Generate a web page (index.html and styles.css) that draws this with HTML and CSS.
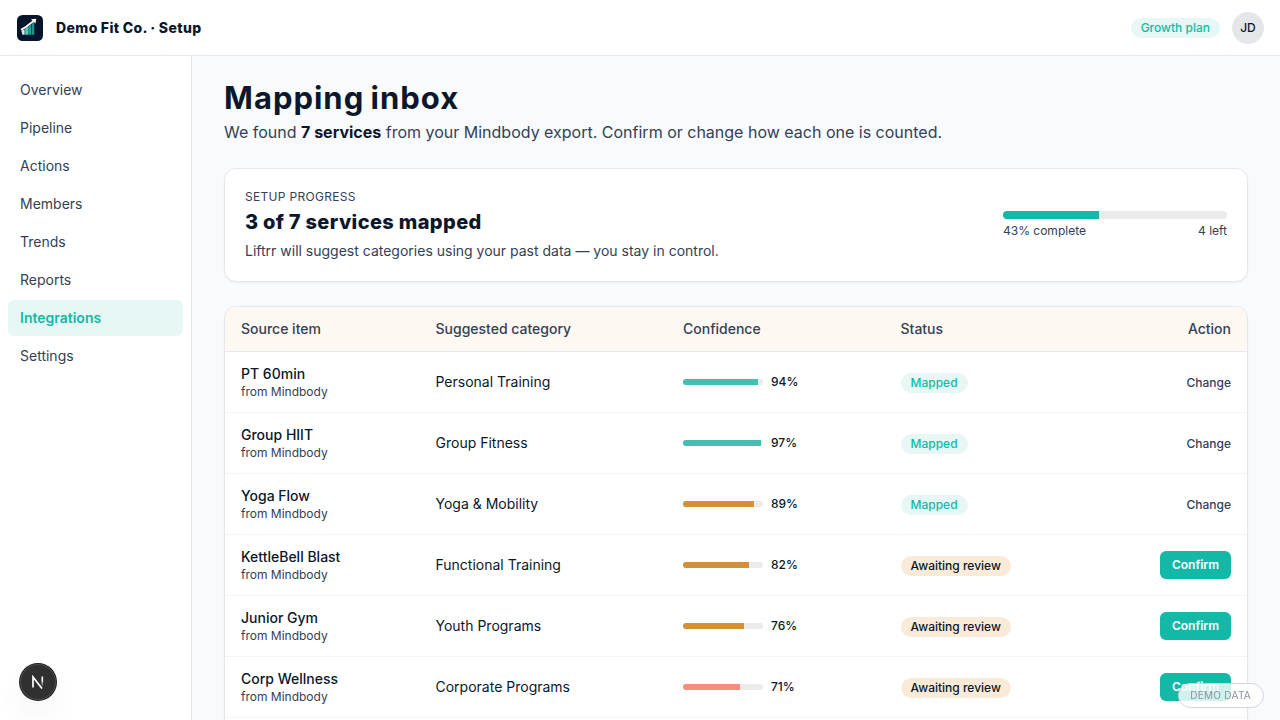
FILE: index.html
```html
<!DOCTYPE html>
<html lang="en">
<head>
    <meta charset="UTF-8">
    <meta name="viewport" content="width=device-width, initial-scale=1.0">
    <title>Mapping inbox</title>
    <link rel="stylesheet" href="styles.css">
</head>
<body>
    <header class="topbar">
        <svg class="logo" viewBox="0 0 28 28">
            <rect x="1" y="1" width="26" height="26" rx="5.5" fill="#07152b"/>
            <path d="M5.3 16.8 8.6 15.2v5.600H6.500z" fill="#d5f2ee"/>
            <path d="M9.2 14.600 12.200 12.800v8H9.200z" fill="#5cc9bd"/>
            <path d="M12.200 12.800 15 10.500v10.300h-2.800z" fill="#14a698"/>
            <path d="M15.600 10 18.300 7.800v13h-2.700z" fill="#2a8f8a"/>
            <path d="M5 15.800 9.800 13 17.800 6.800" fill="none" stroke="#fff" stroke-width="1.800"/>
            <path d="M15 5.200 20.300 4.800 19.400 9.500z" fill="#fff"/>
        </svg>
        <div class="company">Demo Fit Co. · Setup</div>
        <span class="pill plan">Growth plan</span>
        <div class="avatar">JD</div>
    </header>

    <div class="layout">
        <nav class="sidebar">
            <a class="nav-item">Overview</a>
            <a class="nav-item">Pipeline</a>
            <a class="nav-item">Actions</a>
            <a class="nav-item">Members</a>
            <a class="nav-item">Trends</a>
            <a class="nav-item">Reports</a>
            <a class="nav-item active">Integrations</a>
            <a class="nav-item">Settings</a>
        </nav>

        <main class="content">
            <h1>Mapping inbox</h1>
            <p class="intro">We found <strong>7 services</strong> from your Mindbody export. Confirm or change how each one is counted.</p>

            <section class="card progress-card">
                <div>
                    <div class="eyebrow">SETUP PROGRESS</div>
                    <h2>3 of 7 services mapped</h2>
                    <p class="hint">Liftrr will suggest categories using your past data — you stay in control.</p>
                </div>
                <div class="progress">
                    <div class="track"><div class="fill" style="width: 43%"></div></div>
                    <div class="progress-labels"><span>43% complete</span><span>4 left</span></div>
                </div>
            </section>

            <section class="card table-card">
                <table>
                    <colgroup>
                        <col class="col-source">
                        <col class="col-category">
                        <col class="col-confidence">
                        <col class="col-status">
                        <col>
                    </colgroup>
                    <thead>
                        <tr><th>Source item</th><th>Suggested category</th><th>Confidence</th><th>Status</th><th class="action">Action</th></tr>
                    </thead>
                    <tbody>
                        <tr>
                            <td><div class="name">PT 60min</div><div class="from">from Mindbody</div></td>
                            <td>Personal Training</td>
                            <td><div class="confidence"><div class="bar"><div class="fill high" style="width: 94%"></div></div>94%</div></td>
                            <td><span class="pill">Mapped</span></td>
                            <td class="action"><button class="change">Change</button></td>
                        </tr>
                        <tr>
                            <td><div class="name">Group HIIT</div><div class="from">from Mindbody</div></td>
                            <td>Group Fitness</td>
                            <td><div class="confidence"><div class="bar"><div class="fill high" style="width: 97%"></div></div>97%</div></td>
                            <td><span class="pill">Mapped</span></td>
                            <td class="action"><button class="change">Change</button></td>
                        </tr>
                        <tr>
                            <td><div class="name">Yoga Flow</div><div class="from">from Mindbody</div></td>
                            <td>Yoga &amp; Mobility</td>
                            <td><div class="confidence"><div class="bar"><div class="fill medium" style="width: 89%"></div></div>89%</div></td>
                            <td><span class="pill">Mapped</span></td>
                            <td class="action"><button class="change">Change</button></td>
                        </tr>
                        <tr>
                            <td><div class="name">KettleBell Blast</div><div class="from">from Mindbody</div></td>
                            <td>Functional Training</td>
                            <td><div class="confidence"><div class="bar"><div class="fill medium" style="width: 82%"></div></div>82%</div></td>
                            <td><span class="pill waiting">Awaiting review</span></td>
                            <td class="action"><button class="confirm">Confirm</button></td>
                        </tr>
                        <tr>
                            <td><div class="name">Junior Gym</div><div class="from">from Mindbody</div></td>
                            <td>Youth Programs</td>
                            <td><div class="confidence"><div class="bar"><div class="fill medium" style="width: 76%"></div></div>76%</div></td>
                            <td><span class="pill waiting">Awaiting review</span></td>
                            <td class="action"><button class="confirm">Confirm</button></td>
                        </tr>
                        <tr>
                            <td><div class="name">Corp Wellness</div><div class="from">from Mindbody</div></td>
                            <td>Corporate Programs</td>
                            <td><div class="confidence"><div class="bar"><div class="fill low" style="width: 71%"></div></div>71%</div></td>
                            <td><span class="pill waiting">Awaiting review</span></td>
                            <td class="action"><button class="confirm">Confirm</button></td>
                        </tr>
                        <tr><td colspan="5"></td></tr>
                    </tbody>
                </table>
            </section>
        </main>
    </div>

    <div class="dev-badge">
        <svg width="14" height="14" viewBox="0 0 14 14" fill="none" stroke-width="1.700">
            <defs>
                <linearGradient id="fade" x1="0" y1="0" x2="0" y2="1">
                    <stop offset="0.4" stop-color="#fff"/>
                    <stop offset="1" stop-color="#fff" stop-opacity="0.1"/>
                </linearGradient>
            </defs>
            <path d="M2 12.500V2l9 11.500" stroke="#fff"/>
            <rect x="10.500" y="1.500" width="1.600" height="9.500" fill="url(#fade)"/>
        </svg>
    </div>
    <div class="demo-tag">DEMO DATA</div>
</body>
</html>
```
FILE: styles.css
```css
* {
    box-sizing: border-box;
}

body {
    margin: 0;
    height: 100vh;
    overflow: hidden;
    font-family: Inter, sans-serif;
    font-size: 14px;
    line-height: 20px;
    color: #0b172a;
    background: #f8fafc;
}

h1, h2, p {
    margin: 0;
}

.topbar {
    display: flex;
    align-items: center;
    height: 56px;
    padding: 0 16px;
    background: #fff;
    border-bottom: 1px solid #e5e7eb;
}

.logo {
    width: 28px;
    height: 28px;
    margin-right: 12px;
}

.company {
    flex: 1;
    font-weight: 800;
    letter-spacing: 0.38px;
    word-spacing: -0.3px;
}

.pill {
    display: inline-block;
    padding: 2px 10px;
    border-radius: 10px;
    font-size: 12px;
    line-height: 16px;
    font-weight: 500;
    color: #14b8a6;
    background: #e6f7f5;
    vertical-align: middle;
}

.pill.waiting {
    color: #0b172a;
    background: #faebd9;
}

.avatar {
    width: 32px;
    height: 32px;
    margin-left: 12px;
    border-radius: 50%;
    background: #e5e6e9;
    font-size: 12px;
    font-weight: 500;
    line-height: 32px;
    text-align: center;
}

.layout {
    display: flex;
    height: calc(100vh - 56px);
}

.sidebar {
    display: flex;
    flex-direction: column;
    gap: 2px;
    width: 192px;
    padding: 16px 8px;
    background: #fff;
    border-right: 1px solid #e5e7eb;
}

.nav-item {
    padding: 8px 12px;
    border-radius: 6px;
    color: #334155;
}

.nav-item.active {
    color: #14b8a6;
    background: #e6f7f5;
    font-weight: 600;
}

.content {
    flex: 1;
    padding: 24px 32px;
    overflow: hidden;
}

h1 {
    font-size: 31px;
    line-height: 36px;
    font-weight: 700;
    letter-spacing: 1px;
    word-spacing: -2px;
}

.intro {
    margin-top: 4px;
    font-size: 16px;
    line-height: 24px;
    color: #334155;
}

.intro strong {
    font-weight: 700;
    color: #0b172a;
}

.card {
    background: #fff;
    border: 1px solid #e5e7eb;
    border-radius: 12px;
    box-shadow: 0 1px 2px rgba(0, 0, 0, 0.05);
    margin-top: 24px;
}

.progress-card {
    display: flex;
    align-items: center;
    justify-content: space-between;
    height: 114px;
    padding: 20px;
}

.eyebrow {
    font-size: 12px;
    line-height: 16px;
    letter-spacing: 0.3px;
    color: #334155;
}

h2 {
    margin-top: 3px;
    font-size: 20px;
    line-height: 28px;
    font-weight: 800;
    letter-spacing: 0.4px;
    word-spacing: -0.3px;
}

.hint {
    margin-top: 5px;
    color: #334155;
}

.progress {
    width: 224px;
}

.track {
    height: 8px;
    border-radius: 4px;
    background: #ebebec;
    overflow: hidden;
}

.fill {
    height: 100%;
    background: #14b8a6;
}

.progress-labels {
    display: flex;
    justify-content: space-between;
    margin-top: 4px;
    font-size: 12px;
    line-height: 16px;
    color: #334155;
}

.table-card {
    overflow: hidden;
}

table {
    width: 100%;
    table-layout: fixed;
    border-collapse: separate;
    border-spacing: 0;
}

.col-source { width: 194.5px; }
.col-category { width: 247.5px; }
.col-confidence { width: 217.5px; }
.col-status { width: 200px; }

th {
    height: 45px;
    padding: 0 16px;
    text-align: left;
    font-weight: 500;
    color: #334155;
    background: #fdf8f2;
    border-bottom: 1px solid #e5e7eb;
}

td {
    height: 61px;
    padding: 0 16px;
    vertical-align: middle;
    border-bottom: 1px solid #f3f4f6;
}

.name {
    font-weight: 500;
}

.from {
    font-size: 12px;
    line-height: 16px;
    color: #334155;
}

.confidence {
    display: flex;
    align-items: center;
    gap: 8px;
    font-size: 12px;
    line-height: 16px;
    font-weight: 500;
}

.bar {
    width: 80px;
    height: 6px;
    border-radius: 3px;
    background: #ebebec;
    overflow: hidden;
}

.high { background: #43bfb2; }
.medium { background: #d68f38; }
.low { background: #f58f7c; }

.action {
    text-align: right;
}

button {
    border: 0;
    font-family: inherit;
    font-size: 12px;
    line-height: 16px;
}

.change {
    padding: 0;
    font-weight: 500;
    color: #334155;
    background: none;
}

.confirm {
    padding: 6px 12px;
    border-radius: 6px;
    font-weight: 600;
    color: #fff;
    background: #14b8a6;
}

/* floating badges */
.dev-badge {
    position: fixed;
    left: 20px;
    bottom: 20px;
    display: flex;
    align-items: center;
    justify-content: center;
    width: 36px;
    height: 36px;
    border-radius: 50%;
    background: #303030;
    box-shadow: 0 0 0 1px #1c1c1c, inset 0 0 0 1px #4a4a4a, 0 16px 32px -8px rgba(0, 0, 0, 0.15);
}

.demo-tag {
    position: fixed;
    right: 16px;
    bottom: 12px;
    padding: 4px 12px 4px 11px;
    border: 1px solid #d1d5db;
    border-radius: 13px;
    font-size: 10px;
    line-height: 15px;
    letter-spacing: 0.3px;
    color: #8b929c;
    background: rgba(255, 255, 255, 0.8);
}
```
